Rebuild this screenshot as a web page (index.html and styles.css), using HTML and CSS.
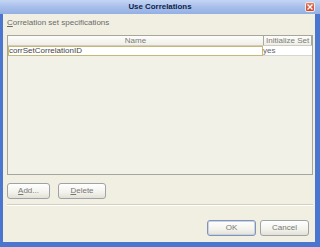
FILE: index.html
```html
<!DOCTYPE html>
<html>
<head>
<meta charset="utf-8">
<link rel="stylesheet" href="styles.css">
</head>
<body>
<div class="window">
  <div class="titlebar">
    <span class="title">Use Correlations</span>
    <span class="close"><svg width="10" height="10" viewBox="0 0 10 10"><path d="M2.5 2.5 L7.5 7.5 M7.5 2.5 L2.5 7.5" stroke="#fff" stroke-width="1.6" stroke-linecap="square"/></svg></span>
  </div>
  <div class="frame">
    <div class="label"><u>C</u>orrelation set specifications</div>
    <div class="table">
      <div class="thead">
        <div class="th th-name">Name</div>
        <div class="th th-init">Initialize Set</div>
      </div>
      <div class="row">
        <div class="td td-name">corrSetCorrelationID</div>
        <div class="td td-init">yes</div>
      </div>
    </div>
    <div class="actions">
      <button class="btn btn-add"><u>A</u>dd...</button>
      <button class="btn btn-del"><u>D</u>elete</button>
    </div>
    <div class="sep"></div>
    <div class="footer">
      <button class="btn btn-ok">OK</button>
      <button class="btn btn-cancel">Cancel</button>
    </div>
  </div>
</div>
</body>
</html>
```

FILE: styles.css
```css
html, body {
  margin: 0;
  padding: 0;
  background: #f1efe2;
}
body {
  font-family: "Liberation Sans", Arial, sans-serif;
  font-size: 8px;
  color: #555;
}
.window {
  width: 320px;
  height: 247px;
  display: flex;
  flex-direction: column;
  overflow: hidden;
}
.titlebar {
  position: relative;
  height: 14px;
  flex: none;
  background: linear-gradient(#c6d6f4, #a7bfeb 50%, #93afe3);
  display: flex;
  align-items: center;
  justify-content: center;
}
.title {
  font-weight: bold;
  font-size: 7.9px;
  color: #0e1e4a;
  line-height: 14px;
}
.close {
  position: absolute;
  left: 305px;
  top: 2px;
  width: 10px;
  height: 10px;
  box-sizing: border-box;
  border: 1px solid #f4e8e4;
  border-radius: 2px;
  background: linear-gradient(#e27a62, #c9452a);
  display: flex;
  align-items: center;
  justify-content: center;
}
.close svg {
  width: 8px;
  height: 8px;
}
.frame {
  flex: 1;
  display: flex;
  flex-direction: column;
  background: #f1efe2;
  border-left: 3px solid #4a76cf;
  border-right: 5px solid #4a76cf;
  border-bottom: 5px solid #4a76cf;
  padding: 4px 2px 0 4px;
}
.label {
  height: 10px;
  line-height: 10px;
  color: #6a6a6a;
}
.label u, .btn u {
  text-decoration: underline;
}
.table {
  margin-top: 7px;
  height: 140px;
  box-sizing: border-box;
  border: 1px solid #a7a69c;
  background: #f2f1e7;
  display: flex;
  flex-direction: column;
}
.thead {
  display: grid;
  grid-template-columns: 255px 1fr;
  height: 9px;
  background: linear-gradient(#fdfdfb, #f0efe6);
  border-bottom: 1px solid #cfcdc1;
}
.th {
  line-height: 9px;
  color: #7a7a7a;
  text-align: center;
}
.th-init {
  border-left: 1px solid #a9a8a0;
  border-right: 1px solid #a9a8a0;
  text-align: left;
  padding-left: 2px;
}
.row {
  display: grid;
  grid-template-columns: 255px 1fr;
  height: 10px;
  background: #fff;
}
.td {
  line-height: 10px;
  color: #444;
}
.td-name {
  box-sizing: border-box;
  border: 1px solid #c8b878;
  line-height: 8px;
  padding-left: 0;
}
.td-init {
  border-bottom: 1px solid #d8d7cf;
  line-height: 9px;
  padding-left: 0;
  color: #666;
}
.actions {
  margin-top: 8px;
  display: flex;
  gap: 8px;
}
.btn {
  font-family: "Liberation Sans", Arial, sans-serif;
  font-size: 8px;
  color: #777;
  height: 16px;
  padding: 0;
  box-sizing: border-box;
  border: 1px solid #9fa2a6;
  border-radius: 3px;
  background: linear-gradient(#ffffff, #f3f2ec 60%, #e3e1d5);
  line-height: 14px;
}
.btn-add { width: 43px; }
.btn-del { width: 48px; }
.sep {
  margin-top: 5px;
  height: 1px;
  background: #d3d0c2;
  border-bottom: 1px solid #ffffff;
}
.footer {
  margin-top: 14px;
  display: flex;
  justify-content: flex-end;
  gap: 4px;
  padding-right: 4px;
}
.btn-ok {
  width: 49px;
  border-color: #8592b0;
  box-shadow: inset 0 0 0 1px #c5d3ef;
}
.btn-cancel { width: 49px; }
```
